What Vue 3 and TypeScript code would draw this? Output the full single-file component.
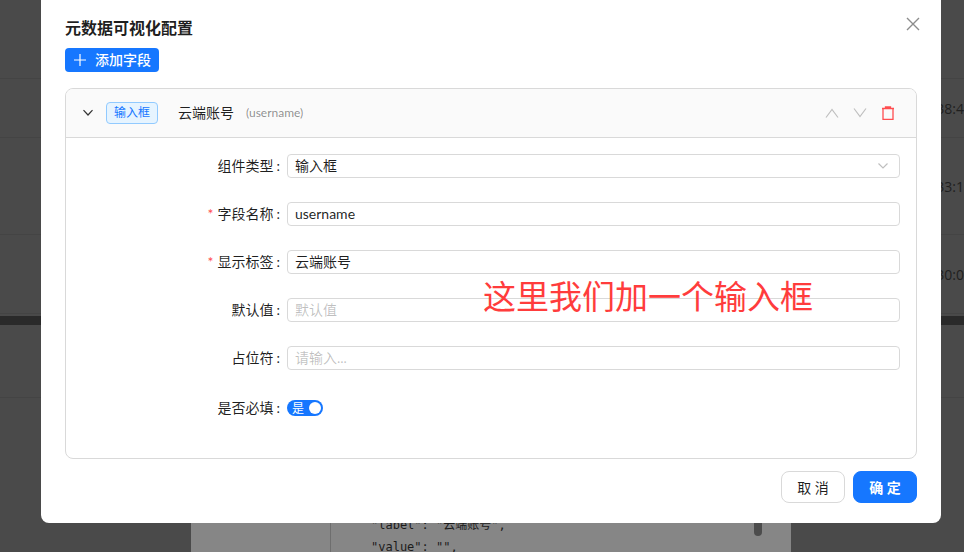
<script setup lang="ts">
interface Field {
  label: string
  required?: boolean
  value?: string
  placeholder?: string
}
const fields: Field[] = [
  { label: '字段名称', required: true, value: 'username' },
  { label: '显示标签', required: true, value: '云端账号' },
  { label: '默认值', placeholder: '默认值' },
  { label: '占位符', placeholder: '请输入...' },
]
</script>

<template>
  <div class="page">
    <div class="backdrop">
      <div class="bg-row r1"><span class="time">2024-01-01 10:38:4</span></div>
      <div class="bg-row r2"><span class="time">2024-01-01 10:33:1</span></div>
      <div class="bg-row r3"><span class="time">2024-01-01 10:30:0</span></div>
      <div class="bg-gap"></div>
      <div class="bg-bar"></div>
      <div class="bg-row2"></div>
    </div>

    <div class="under-dialog">
      <div class="under-left"></div>
      <pre class="under-code">"label": "云端账号",
"value": "",</pre>
      <div class="under-scroll"></div>
    </div>

    <div class="modal">
      <svg class="close" width="14" height="14" viewBox="0 0 14 14" fill="none" stroke="#8c8c8c" stroke-width="1.4">
        <path d="M1 1l12 12M13 1L1 13" />
      </svg>
      <h2 class="title">元数据可视化配置</h2>
      <div class="add-row">
        <button class="add-btn">
          <svg width="12" height="12" viewBox="0 0 12 12" fill="none" stroke="#fff" stroke-width="1.2">
            <path d="M6 0v12M0 6h12" />
          </svg>
          <span>添加字段</span>
        </button>
      </div>

      <section class="card">
        <header class="card-head">
          <svg class="chev" width="12" height="8" viewBox="0 0 12 8" fill="none" stroke="#333" stroke-width="1.2">
            <path d="M1.5 1.2L6 6l4.5-4.8" />
          </svg>
          <span class="tag">输入框</span>
          <span class="name">云端账号</span>
          <span class="key">(username)</span>
          <span class="head-actions">
            <svg width="14" height="10" viewBox="0 0 14 10" fill="none" stroke="#bfbfbf" stroke-width="1.2">
              <path d="M1 9.5L7 1.5l6 8" />
            </svg>
            <svg width="14" height="10" viewBox="0 0 14 10" fill="none" stroke="#bfbfbf" stroke-width="1.2">
              <path d="M1 .5l6 8 6-8" />
            </svg>
            <svg class="trash" width="14" height="14" viewBox="0 0 14 14" fill="none" stroke="#ff4d4f" stroke-width="1.3">
              <path d="M1 2.5h12M4.5 2.5V1h5v1.5M2 2.5v11h10v-11" />
            </svg>
          </span>
        </header>

        <div class="form">
          <div class="row">
            <label class="label"><span class="lt">组件类型<span class="colon">:</span></span></label>
            <div class="control select">
              <span>输入框</span>
              <svg width="10" height="6" viewBox="0 0 10 6" fill="none" stroke="#bfbfbf" stroke-width="1.2">
                <path d="M0.5 0.5L5 5l4.5-4.5" />
              </svg>
            </div>
          </div>
          <div v-for="f in fields" :key="f.label" class="row">
            <label class="label"><i v-if="f.required" class="req">*</i><span class="lt">{{ f.label }}<span class="colon">:</span></span></label>
            <div class="control">
              <span v-if="f.value">{{ f.value }}</span>
              <span v-else class="ph">{{ f.placeholder }}</span>
            </div>
          </div>
          <div class="row switch-row">
            <label class="label"><span class="lt">是否必填<span class="colon">:</span></span></label>
            <div class="switch"><span class="sw-text">是</span><span class="knob"></span></div>
          </div>
        </div>
      </section>

      <footer class="foot">
        <button class="btn">取 消</button>
        <button class="btn primary">确 定</button>
      </footer>

      <div class="note">这里我们加一个输入框</div>
    </div>
  </div>
</template>

<style>
html, body { margin: 0; background: #4a4a4a; }
</style>

<style scoped>
.page {
  position: relative;
  width: 964px;
  height: 552px;
  overflow: hidden;
  background: #4a4a4a;
  font-family: Lato, "Noto Sans CJK SC", sans-serif;
  font-size: 14px;
  color: rgba(0, 0, 0, 0.88);
}
.backdrop { display: flex; flex-direction: column; padding-top: 78px; }
.bg-row {
  box-sizing: border-box;
  border-top: 1px solid #444;
  display: flex;
  align-items: center;
  justify-content: flex-end;
  overflow: hidden;
}
.r1 { height: 59px; }
.r2 { height: 97px; }
.r3 { height: 79px; }
.bg-gap { height: 3px; border-top: 1px solid #444; box-sizing: border-box; }
.time {
  font-family: "Open Sans", sans-serif;
  font-size: 14px;
  color: #1f1f1f;
  white-space: nowrap;
  margin-right: 0;
}
.bg-bar { height: 9px; background: #2a2a2a; }
.bg-row2 { height: 72px; border-bottom: 1px solid #444; }
.under-dialog {
  position: absolute;
  left: 191px;
  top: 500px;
  width: 600px;
  height: 60px;
  background: #868686;
  display: flex;
}
.under-left { width: 139px; border-right: 1px solid #6e6e6e; }
.under-code {
  margin: 0;
  padding: 14px 0 0 40px;
  font-family: "DejaVu Sans Mono", "Noto Sans CJK SC", monospace;
  font-size: 12px;
  line-height: 22px;
  color: #1c1c1c;
}
.under-scroll {
  position: absolute;
  left: 563px;
  top: 10px;
  width: 8px;
  height: 26px;
  border-radius: 4px;
  background: #4c4c4c;
}
.modal {
  position: absolute;
  left: 41px;
  top: -8px;
  width: 900px;
  height: 531px;
  box-sizing: border-box;
  padding: 26px 24px 20px;
  background: #fff;
  border-radius: 8px;
  display: flex;
  flex-direction: column;
}
.close { position: absolute; right: 21px; top: 25px; }
.title {
  margin: 0 0 10px;
  font-size: 16px;
  line-height: 20px;
  font-weight: 600;
  color: rgba(0, 0, 0, 0.88);
}
.add-row { display: flex; margin-bottom: 16px; }
.add-btn {
  display: flex;
  align-items: center;
  gap: 9px;
  height: 24px;
  padding: 0 8px 0 9px;
  border: 0;
  border-radius: 4px;
  background: #1677ff;
  color: #fff;
  font: inherit;
  line-height: 22px;
  font-weight: 500;
}
.card {
  height: 371px;
  box-sizing: border-box;
  border: 1px solid #d9d9d9;
  border-radius: 8px;
  overflow: hidden;
}
.card-head {
  height: 49px;
  box-sizing: border-box;
  border-bottom: 1px solid #d9d9d9;
  background: #fafafa;
  display: flex;
  align-items: center;
  padding: 0 21px 0 16px;
}
.chev { margin-right: 12px; }
.tag {
  box-sizing: border-box;
  height: 22px;
  width: 52px;
  text-align: center;
  border: 1px solid #91caff;
  border-radius: 4px;
  background: #e6f4ff;
  color: #1677ff;
  font-size: 12px;
  line-height: 20px;
  margin-right: 20px;
}
.name { margin: -2px 12px 0 0; }
.key { font-size: 12px; color: rgba(0, 0, 0, 0.45); margin-top: -1px; }
.head-actions { margin-left: auto; display: flex; align-items: center; gap: 14px; }
.form { padding: 16px 16px 0 0; display: flex; flex-direction: column; gap: 24px; }
.row { display: flex; align-items: center; height: 24px; }
.switch-row { margin-top: 2px; }
.label { width: 221px; text-align: right; box-sizing: border-box; padding-right: 7px; flex: none; margin-top: -2px; }
.colon { margin-left: 3px; }
.req { font-style: normal; color: #ff4d4f; margin-right: 4px; }
.control {
  flex: 1;
  height: 24px;
  box-sizing: border-box;
  border: 1px solid #d9d9d9;
  border-radius: 4px;
  padding: 0 7px;
  line-height: 22px;
  display: flex;
  align-items: center;
  justify-content: space-between;
}
.select svg { margin-right: 4px; }
.ph { color: rgba(0, 0, 0, 0.25); }
.switch {
  position: relative;
  width: 36px;
  height: 16px;
  border-radius: 8px;
  background: #1677ff;
  color: #fff;
  font-size: 12px;
  line-height: 16px;
}
.sw-text { position: absolute; left: 5px; top: 1px; }
.knob { position: absolute; right: 2px; top: 2px; width: 12px; height: 12px; border-radius: 50%; background: #fff; }
.foot { margin-top: 12px; display: flex; justify-content: flex-end; gap: 8px; }
.btn {
  width: 64px;
  height: 32px;
  box-sizing: border-box;
  border: 1px solid #d9d9d9;
  border-radius: 8px;
  background: #fff;
  font: inherit;
  color: rgba(0, 0, 0, 0.88);
  padding: 0;
}
.btn.primary { background: #1677ff; border-color: #1677ff; color: #fff; font-weight: 700; }
.note {
  position: absolute;
  left: 442px;
  top: 281px;
  font-size: 33px;
  line-height: 46px;
  color: #ff3c3c;
  white-space: nowrap;
}
</style>
